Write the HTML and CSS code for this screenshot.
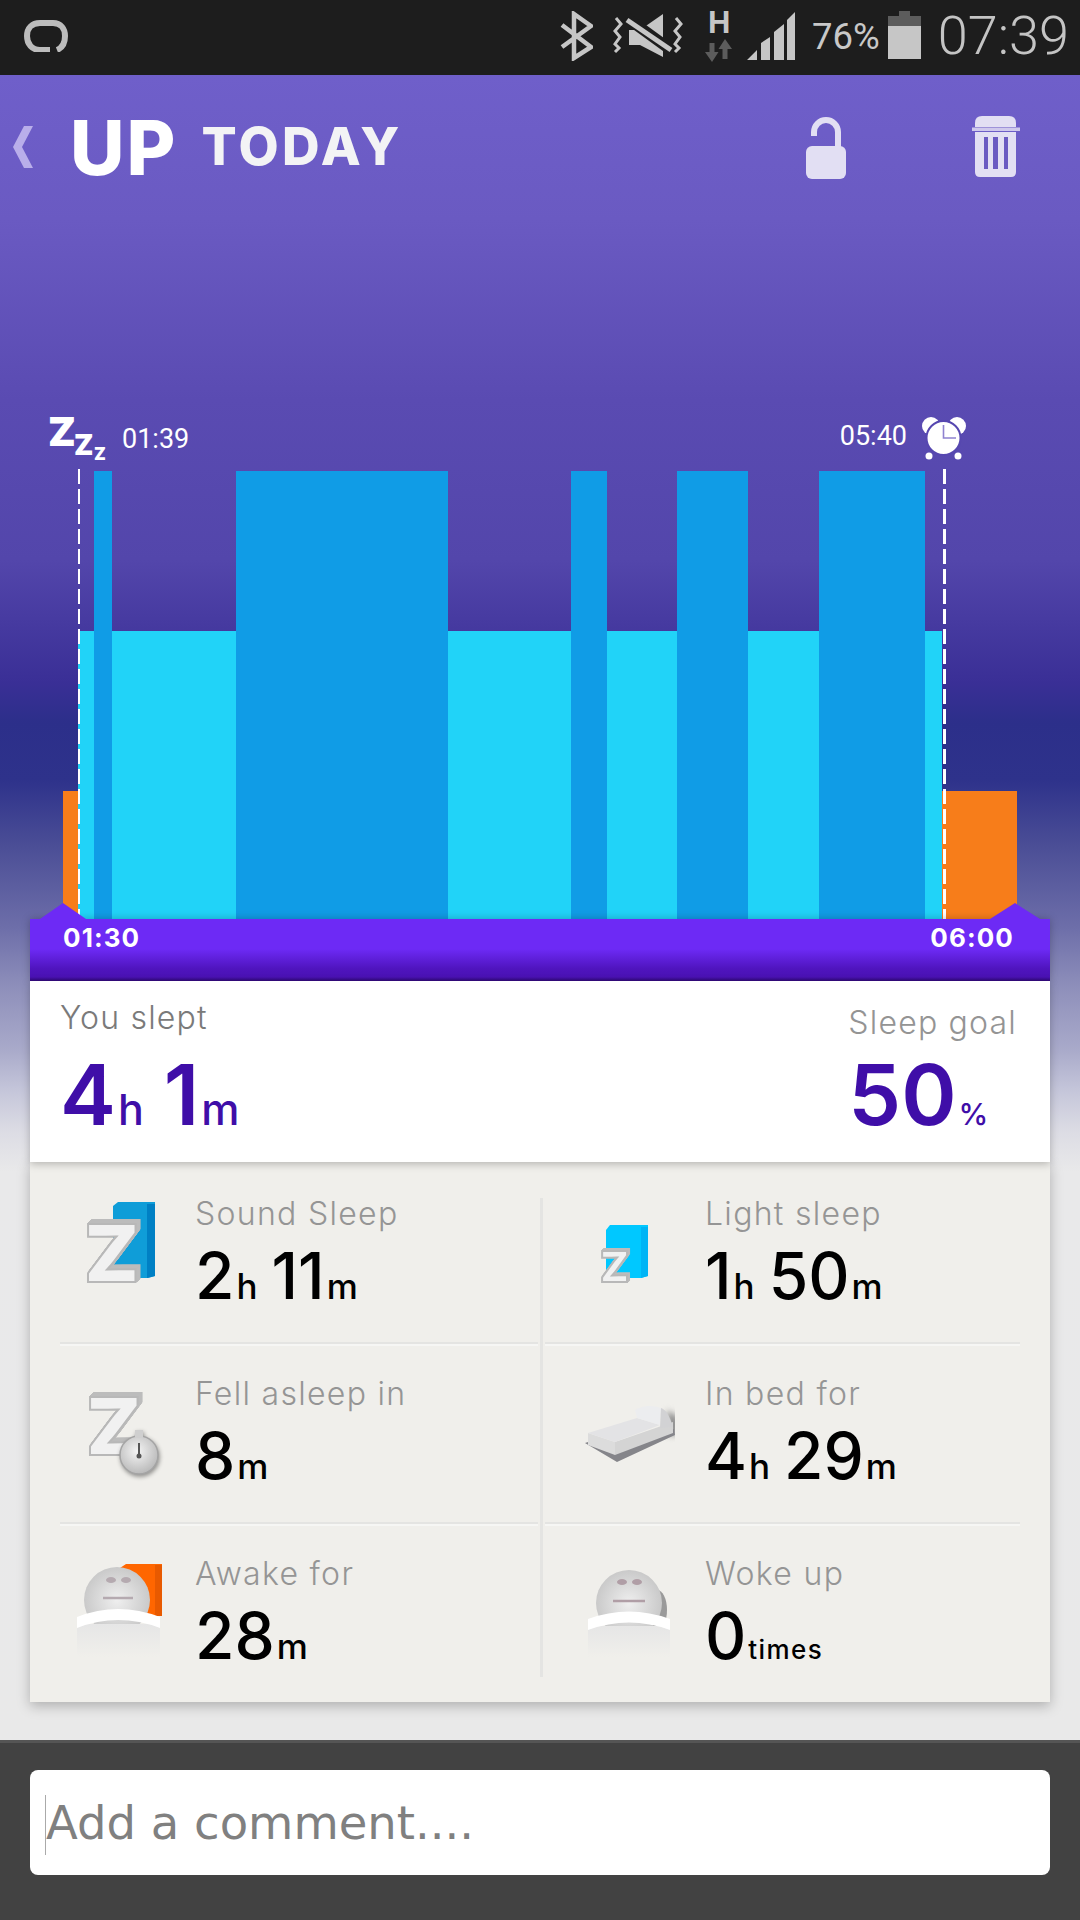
FILE: index.html
```html
<!DOCTYPE html>
<html lang="en">
<head>
<meta charset="utf-8">
<title>UP Today</title>
<link rel="stylesheet" href="styles.css">
</head>
<body>
<div class="phone">
  <div class="status">
    <svg class="s-logo" viewBox="0 0 44 32"><path d="M26 30H16C8 30 3 24 3 16C3 8 8 3 16 3H29C37 3 41 9 41 16C41 23 38 28 33 30" fill="none" stroke="#bcbcbc" stroke-width="6"/></svg>
    <div class="s-right">
      <svg class="s-bt" viewBox="0 0 33 50"><path d="M2 14L31 36L14 47V3L31 15L2 36" fill="none" stroke="#c6c6c6" stroke-width="4.5"/></svg>
      <svg class="s-mute" viewBox="0 0 71 50">
        <path d="M3 8L8 14L2 21L7 27L2 34L6 38L2 42M63 8L68 14L62 21L67 27L62 34L66 38L62 42" fill="none" stroke="#c6c6c6" stroke-width="3"/>
        <path d="M16 20H27L50 4V47L27 35H16Z" fill="#c6c6c6"/>
        <path d="M14 8L58 40" stroke="#1d1d1d" stroke-width="11"/>
        <path d="M14 10L58 40" stroke="#c6c6c6" stroke-width="5"/>
      </svg>
      <svg class="s-net" viewBox="0 -10 30 62">
        <text x="4" y="23" class="s-h">H</text>
        <path d="M5.500 33H10.500V42H14.500L8 52L1 42H5.500ZM18.500 49V39H14.500L21 29L28 39H23.500V49Z" fill="#5c5c5c"/>
      </svg>
      <svg class="s-signal" viewBox="0 0 48 48"><path d="M0 48L10 38V48ZM14 48V31L23 25V48ZM27 48V20L37 12V48ZM40 48V8L48 0V48Z" fill="#c6c6c6"/></svg>
      <span class="s-pct">76%</span>
      <svg class="s-batt" viewBox="0 0 33 48"><path d="M11 0H22V5H33V15H0V5H11Z" fill="#5c5c5c"/><rect y="15" width="33" height="33" fill="#c6c6c6"/></svg>
      <span class="s-time">07:39</span>
    </div>
  </div>

  <div class="main">
    <header class="header">
      <svg class="h-back" viewBox="0 0 20 42"><path d="M20 0H11L0 21L11 42H20L9 21Z" fill="#b9aeea"/></svg>
      <span class="h-up">UP</span>
      <span class="h-today">TODAY</span>
      <svg class="h-lock" viewBox="0 0 40 64"><path d="M8 20V16A12 12 0 0 1 32 16V32" fill="none" stroke="#e2dff3" stroke-width="6"/><rect y="30" width="40" height="33" rx="6" fill="#e2dff3"/></svg>
      <svg class="h-trash" viewBox="0 0 48 62"><path d="M3 11V7Q3 0 10 0H37Q44 0 44 7V11Z" fill="#e2dff3"/><rect y="11.500" width="48" height="3.500" fill="#cfc9ec"/><path d="M3 16H44V56Q44 61 39 61H8Q3 61 3 56Z" fill="#e2dff3"/><path d="M12 21H16V53H12ZM21 21H26V53H21ZM32 21H36V53H32Z" fill="#6a5ac2"/></svg>
    </header>

    <div class="content">
      <div class="chart">
        <div class="markers">
          <svg class="m-zzz" viewBox="0 -14 60 62"><text x="0" y="29" class="zz z1">Z</text><text x="26" y="38" class="zz z2">Z</text><text x="46" y="43" class="zz z3">Z</text></svg>
          <span class="m-time m-start">01:39</span>
          <span class="m-time m-end">05:40</span>
          <svg class="m-clock" viewBox="0 0 44 44">
            <circle cx="9" cy="9" r="9" fill="#fff"/><circle cx="35" cy="9" r="9" fill="#fff"/>
            <circle cx="7" cy="39" r="3.500" fill="#fff"/><circle cx="36" cy="39" r="3.500" fill="#fff"/>
            <circle cx="21.500" cy="21" r="17" fill="#fff" stroke="#5647b0" stroke-width="2"/>
            <path d="M21.500 8V21H34" fill="none" stroke="#8f82d0" stroke-width="1.600"/>
          </svg>
        </div>
        <div class="bars">
          <i class="bar orange" style="width:15px"></i>
          <i class="bar light" style="width:16px"></i>
          <i class="bar dark" style="width:18px"></i>
          <i class="bar light" style="width:124px"></i>
          <i class="bar dark" style="width:212px"></i>
          <i class="bar light" style="width:123px"></i>
          <i class="bar dark" style="width:36px"></i>
          <i class="bar light" style="width:70px"></i>
          <i class="bar dark" style="width:71px"></i>
          <i class="bar light" style="width:71px"></i>
          <i class="bar dark" style="width:106px"></i>
          <i class="bar light" style="width:17px"></i>
          <i class="bar orange" style="width:75px"></i>
        </div>
        <i class="dash dash-l"></i>
        <i class="dash dash-r"></i>
      </div>

      <div class="band">
        <i class="tab tab-l"></i>
        <i class="tab tab-r"></i>
        <span>01:30</span>
        <span>06:00</span>
      </div>

      <div class="summary">
        <div class="sum-left">
          <div class="sum-label">You slept</div>
          <div class="sum-value"><b>4</b><small>h</small><b class="gap">1</b><small>m</small></div>
        </div>
        <div class="sum-right">
          <div class="sum-label muted">Sleep goal</div>
          <div class="sum-value in"><b>50</b><small class="pct">%</small></div>
        </div>
      </div>

      <div class="stats">
        <div class="stat">
          <svg class="ico" viewBox="0 0 130 150">
            <path d="M53 42L58 38H95V112L88 114H53Z" fill="#0f9dd8"/><path d="M87 40H95V112L87 114Z" fill="#0080c4"/>
            <text x="24" y="118" class="iz">Z</text>
          </svg>
          <div class="txt"><div class="lbl">Sound Sleep</div><div class="val"><b>2</b><small>h</small><b class="gap">11</b><small>m</small></div></div>
        </div>
        <i class="vline"></i>
        <div class="stat r">
          <svg class="ico" viewBox="0 0 130 150">
            <path d="M61 66L65 61H103V112L96 114H61Z" fill="#00c8ff"/><path d="M96 63H103V112L96 114Z" fill="#00b4f5"/>
            <text x="55" y="118" class="iz iz-s">Z</text>
          </svg>
          <div class="txt"><div class="lbl">Light sleep</div><div class="val"><b>1</b><small>h</small><b class="gap">50</b><small>m</small></div></div>
        </div>

        <div class="stat">
          <svg class="ico" viewBox="0 0 130 150">
            <defs><radialGradient id="w" cx=".45" cy=".4" r=".65"><stop offset="0" stop-color="#f4f4f4"/><stop offset="1" stop-color="#b5b5b5"/></radialGradient></defs>
            <text x="26" y="111" class="iz">Z</text>
            <g class="soft">
              <circle cx="79" cy="111" r="19" fill="url(#w)" stroke="#a4a4a4" stroke-width="1.500"/>
              <rect x="75" y="86" width="8" height="8" fill="#cfcfcf"/>
            </g>
            <path d="M79 99V111" stroke="#555" stroke-width="2"/><circle cx="79" cy="112" r="2.500" fill="#555"/>
          </svg>
          <div class="txt"><div class="lbl">Fell asleep in</div><div class="val"><b>8</b><small>m</small></div></div>
        </div>
        <div class="stat r">
          <svg class="ico" viewBox="0 0 130 150">
            <path class="blur" d="M122 66L134 74L134 90L124 92Z" fill="#8c8c8c"/>
            <path d="M40 99L72 118L130 91L129 85L70 108L43 98Z" fill="#85858a"/>
            <path d="M43 89L70 98V111L43 101Z" fill="#dcdcdc"/>
            <path d="M70 98L128 78V89L70 111Z" fill="#d4d4d4"/>
            <path d="M43 89L92 74L115 81L70 98Z" fill="#e3e3e5"/>
            <path d="M90 66Q102 59 116 64L115 81L92 74Z" fill="#ecedef"/>
            <path d="M116 64Q123 66 128 83L115 84Z" fill="#d2d2d4"/>
          </svg>
          <div class="txt"><div class="lbl">In bed for</div><div class="val"><b>4</b><small>h</small><b class="gap">29</b><small>m</small></div></div>
        </div>

        <div class="stat last">
          <svg class="ico" viewBox="0 0 130 150">
            <defs>
              <radialGradient id="h" cx=".5" cy=".5" r=".6"><stop offset="0" stop-color="#efefef"/><stop offset="1" stop-color="#c2c2c2"/></radialGradient>
              <linearGradient id="f" x1="0" y1="0" x2="0" y2="1"><stop offset="0" stop-color="#e6e6e6"/><stop offset="1" stop-color="#f0efeb"/></linearGradient>
            </defs>
            <path d="M60 44L66 40H102V92H60Z" fill="#ff6600"/><path d="M95 41H102V92H95Z" fill="#e85a00"/>
            <circle cx="57" cy="76" r="33" fill="url(#h)"/>
            <ellipse cx="51" cy="56" rx="5" ry="3" fill="#b5aab0"/><ellipse cx="66" cy="56" rx="5" ry="3" fill="#b5aab0"/>
            <path d="M43 74H73" stroke="#b5aab0" stroke-width="2.500"/>
            <rect x="17" y="100" width="83" height="33" fill="url(#f)"/>
            <path d="M17 93Q58 77 100 93V104Q58 88 17 104Z" fill="#fff"/>
          </svg>
          <div class="txt"><div class="lbl">Awake for</div><div class="val"><b>28</b><small>m</small></div></div>
        </div>
        <div class="stat r last">
          <svg class="ico" viewBox="0 0 130 150">
            <ellipse cx="112" cy="86" rx="10" ry="20" fill="#9a9a9a"/>
            <circle cx="84" cy="79" r="33" fill="url(#h)"/>
            <ellipse cx="77" cy="58" rx="5" ry="3" fill="#b09ea6"/><ellipse cx="92" cy="58" rx="5" ry="3" fill="#b09ea6"/>
            <path d="M68 77H100" stroke="#b09ea6" stroke-width="2.500"/>
            <rect x="43" y="102" width="82" height="31" fill="url(#f)"/>
            <path d="M43 95Q84 80 125 95V106Q84 91 43 106Z" fill="#fff"/>
          </svg>
          <div class="txt"><div class="lbl">Woke up</div><div class="val"><b>0</b><small class="times">times</small></div></div>
        </div>
      </div>
    </div>
  </div>

  <div class="footer">
    <div class="input"><i class="caret"></i><span class="ph">Add a comment....</span></div>
  </div>
</div>
</body>
</html>
```

FILE: styles.css
```css
* { box-sizing: border-box; }
html, body { margin: 0; padding: 0; }
body { width: 1080px; height: 1920px; overflow: hidden; font-family: Inter, "Liberation Sans", sans-serif; }
i { display: block; }

.phone { width: 1080px; height: 1920px; display: flex; flex-direction: column; background: #e9e9e9; }

/* status bar */
.status { height: 75px; background: #1d1d1d; display: flex; align-items: flex-start; justify-content: space-between; flex: none; }
.s-logo { width: 44px; height: 32px; margin: 20px 0 0 24px; }
.s-right { display: flex; align-items: flex-start; padding-right: 11px; }
.s-bt { width: 33px; height: 50px; margin-top: 11px; }
.s-mute { width: 71px; height: 50px; margin: 10px 0 0 20px; }
.s-net { width: 30px; height: 62px; margin: 0 0 0 20px; }
.s-h { font: 700 31px "Liberation Sans", sans-serif; fill: #c6c6c6; }
.s-signal { width: 48px; height: 48px; margin: 12px 0 0 13px; }
.s-pct { font: 400 36.500px/42px Roboto, sans-serif; color: #c8c8c8; margin: 16px 0 0 17px; }
.s-batt { width: 33px; height: 48px; margin: 11px 0 0 8px; }
.s-time { font: 300 54px/60px Roboto, sans-serif; color: #c4c4c4; margin: 6px 0 0 17px; }

/* main area */
.main { height: 1665px; flex: none; background: linear-gradient(180deg, #6f5fca 0, #6a5ac2 145px, #5a4bb2 325px, #5346ab 485px, #3a2f96 607px, #2c2f8a 648px, #2e328b 705px, #4b4e96 771px, #6d6ea9 852px, #8f90bb 914px, #a9aaca 975px, #c5c6da 1016px, #dcdce4 1056px, #e9e9ea 1097px, #e9e9e9 1665px); }
.header { height: 150px; display: flex; align-items: flex-start; position: relative; }
.h-back { width: 20px; height: 42px; margin: 51px 0 0 13px; }
.h-up { font-weight: 800; font-size: 75px; line-height: 80px; color: #fff; margin: 33px 0 0 37px; letter-spacing: 2px; }
.h-today { font-weight: 800; font-size: 52px; line-height: 60px; color: #f3f3f5; margin: 42px 0 0 24px; letter-spacing: 3.500px; }
.h-lock { width: 40px; height: 64px; margin: 41px 0 0 auto; }
.h-trash { width: 48px; height: 62px; margin: 41px 60px 0 126px; }

.content { padding: 0 30px; }
.chart { position: relative; }
.markers { height: 246px; display: flex; align-items: flex-start; padding: 178px 0 0 18px; }
.m-zzz { width: 60px; height: 62px; flex: none; }
.zz { font-family: Inter, sans-serif; font-weight: 900; fill: #fff; }
.z1 { font-size: 40px; }
.z2 { font-size: 28px; }
.z3 { font-size: 17px; }
.m-time { font: 400 27px/32px Roboto, sans-serif; color: #fff; }
.m-start { margin: 20px 0 0 14px; }
.m-end { margin: 17px 0 0 auto; }
.m-clock { width: 44px; height: 44px; margin: 14px 84px 0 15px; flex: none; }

.bars { height: 448px; display: flex; align-items: flex-end; padding-left: 33px; }
.bar { flex: none; }
.orange { height: 128px; background: #f77d1a; }
.light { height: 288px; background: #21d3f8; }
.dark { height: 448px; background: #109ce6; }
.dash { position: absolute; top: 244px; height: 456px; background: repeating-linear-gradient(180deg, #fff 0, #fff 15px, transparent 15px, transparent 20px); }
.dash-l { left: 48px; width: 2px; }
.dash-r { left: 913px; width: 3px; }

.band { position: relative; height: 62px; display: flex; justify-content: space-between; padding: 4px 36px 0 33px; font-weight: 700; font-size: 26px; line-height: 30px; letter-spacing: 1.100px; color: #fff; background: linear-gradient(180deg, #6d2af5 0, #6d2af5 30px, #4f14bd 50px, #4a12b4 58px, #300878 62px); box-shadow: 0 0 8px rgba(0,0,0,.25); }
.tab { position: absolute; top: -16px; height: 16px; background: #6d2af5; clip-path: polygon(0 100%, 50% 0, 100% 100%); }
.tab-l { left: 10px; width: 46px; }
.tab-r { left: 960px; width: 50px; }

/* summary */
.summary { height: 181px; background: #fff; display: flex; justify-content: space-between; padding: 0 33px 0 30px; box-shadow: 0 2px 8px rgba(0,0,0,.25); position: relative; }
.sum-label { font-weight: 300; font-size: 32px; line-height: 36px; letter-spacing: 1.200px; color: #7a7a7a; padding-top: 19px; }
.sum-label.muted { color: #949494; padding-top: 24px; }
.sum-value { display: flex; align-items: baseline; color: #3f0ea8; margin-top: 15px; }
.sum-value b { font-weight: 600; font-size: 84px; line-height: 88px; }
.sum-value small { font-weight: 500; font-size: 43px; margin-left: 2px; }
.sum-value b.gap { margin-left: 20px; }
.sum-value.in { margin: 10px 0 0 0; }
.sum-value small.pct { font-size: 30px; }

/* stats */
.stats { height: 540px; background: #f0efeb; padding: 2px 30px 0; display: grid; grid-template-columns: 478px 7px 475px; grid-template-rows: 180px 180px 178px; box-shadow: 0 4px 12px rgba(0,0,0,.25); }
.stat { display: flex; border-bottom: 2px solid #e4e4e2; box-shadow: 0 2px 0 #f6f6f4; padding-left: 135px; position: relative; }
.stat.r { padding-left: 160px; }
.stat.last { border-bottom: 0; box-shadow: none; }
.vline { grid-column: 2; grid-row: 1 / 4; width: 3px; margin: 34px 0 25px 2px; background: #e4e4e2; }
.stat:nth-child(1) { grid-column: 1; grid-row: 1; }
.stat:nth-child(3) { grid-column: 3; grid-row: 1; }
.stat:nth-child(4) { grid-column: 1; grid-row: 2; }
.stat:nth-child(5) { grid-column: 3; grid-row: 2; }
.stat:nth-child(6) { grid-column: 1; grid-row: 3; }
.stat:nth-child(7) { grid-column: 3; grid-row: 3; }
.ico { position: absolute; left: 0; top: 0; width: 130px; height: 150px; }
.iz { font-family: Inter, sans-serif; font-weight: 900; font-size: 80px; fill: #f1f1f1; stroke: #b8b8b8; stroke-width: 2px; filter: drop-shadow(1px -1px 0 #bcbcbc) drop-shadow(1px -1px 0 #bcbcbc) drop-shadow(1px -1px 0 #bcbcbc) drop-shadow(1px -1px 0 #bcbcbc); }
.iz-s { font-size: 42px; filter: drop-shadow(1px -1px 0 #bcbcbc) drop-shadow(1px -1px 0 #bcbcbc); }
.soft { filter: drop-shadow(1px 2px 2px rgba(0,0,0,.4)); }
.blur { filter: blur(3px); }
.lbl { font-weight: 300; font-size: 32px; line-height: 36px; letter-spacing: 1.300px; color: #959595; padding-top: 32px; white-space: nowrap; }
.val { display: flex; align-items: baseline; color: #000; margin-top: 9px; }
.val b { font-weight: 550; font-size: 64px; line-height: 70px; }
.val small { font-weight: 500; font-size: 35px; margin-left: 2px; }
.val b.gap { margin-left: 14px; }
.val small.times { font-size: 26px; letter-spacing: 1.400px; }

/* footer */
.footer { flex: 1; background: #424242; border-top: 3px solid #555; padding: 27px 30px 0; }
.input { height: 105px; background: #fff; border-radius: 8px; display: flex; align-items: center; padding-left: 15px; }
.caret { width: 1px; height: 60px; background: #aaa; margin-top: 4px; }
.ph { font: 400 46.500px/60px "DejaVu Sans", sans-serif; color: #808080; margin-top: 1px; white-space: nowrap; }
```
